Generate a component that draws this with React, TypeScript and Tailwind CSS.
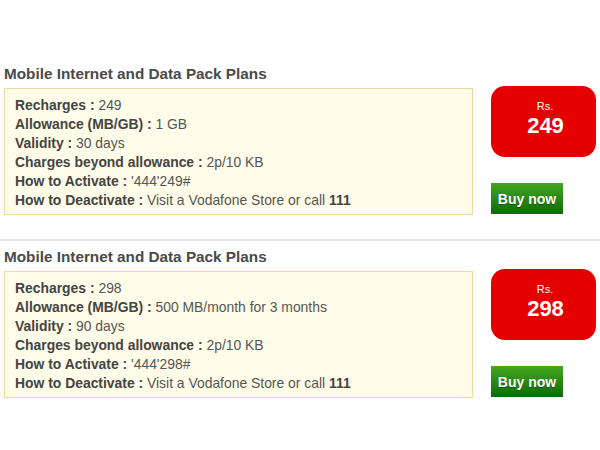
import React from "react";

// --- TYPES ---
type Row = {
  label: string;
  value: React.ReactNode;
};

type Plan = {
  price: string;
  rows: Row[];
};

const plans: Plan[] = [
  {
    price: "249",
    rows: [
      { label: "Recharges", value: "249" },
      { label: "Allowance (MB/GB)", value: "1 GB" },
      { label: "Validity", value: "30 days" },
      { label: "Charges beyond allowance", value: "2p/10 KB" },
      { label: "How to Activate", value: "'444'249#" },
      {
        label: "How to Deactivate",
        value: (
          <>
            Visit a Vodafone Store or call <b className="font-bold text-[#444]">111</b>
          </>
        ),
      },
    ],
  },
  {
    price: "298",
    rows: [
      { label: "Recharges", value: "298" },
      { label: "Allowance (MB/GB)", value: "500 MB/month for 3 months" },
      { label: "Validity", value: "90 days" },
      { label: "Charges beyond allowance", value: "2p/10 KB" },
      { label: "How to Activate", value: "'444'298#" },
      {
        label: "How to Deactivate",
        value: (
          <>
            Visit a Vodafone Store or call <b className="font-bold text-[#444]">111</b>
          </>
        ),
      },
    ],
  },
];

const PlanCard = ({ plan }: { plan: Plan }) => (
  <div className="flex items-start">
    <div className="w-[469px] ml-[4px]">
      <h2 className="h-[18px] leading-[18px] text-[15.3px] font-bold text-[#4a4a4a] mb-[5px]">
        Mobile Internet and Data Pack Plans
      </h2>
      <div className="border border-[#f2d6a2] bg-[#fffdea] pl-[10px] pt-[7px] pb-[4px]">
        {plan.rows.map((row) => (
          <p key={row.label} className="text-[13.9px] leading-[19px] text-[#555]">
            <span className="font-bold text-[#444]">{row.label} :</span> {row.value}
          </p>
        ))}
      </div>
    </div>
    <div className="ml-[18px] pt-[21px] flex flex-col items-start">
      <div className="w-[105px] h-[71px] rounded-[14px] bg-[#e50000] flex flex-col items-center pt-[14px] text-white">
        <span className="text-[11px] leading-[12px] pl-[3px]">Rs.</span>
        <span className="text-[22px] leading-[24px] font-bold mt-[2px] pl-[4px]">
          {plan.price}
        </span>
      </div>
      <button className="mt-[26px] w-[72px] h-[31px] bg-gradient-to-b from-[#43a81f] to-[#0c6a09] text-white text-[14px] font-bold pt-[2px] [text-shadow:0_1px_1px_rgba(0,0,0,0.35)]">
        Buy now
      </button>
    </div>
  </div>
);

export default function App() {
  return (
    <div
      className="w-[600px] h-[450px] bg-white pt-[65px] overflow-hidden"
      style={{ fontFamily: '"Liberation Sans", Arial, sans-serif' }}
    >
      <PlanCard plan={plans[0]} />
      <div className="mt-[24px] mb-[7px] h-[2px] bg-[#e6e6e6]" />
      <PlanCard plan={plans[1]} />
    </div>
  );
}
